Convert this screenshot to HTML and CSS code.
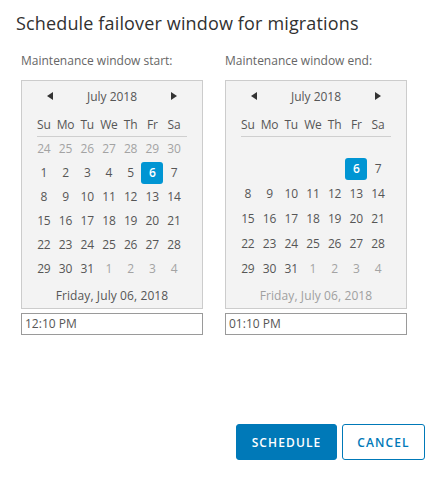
FILE: index.html
```html
<!DOCTYPE html>
<html>
<head>
<meta charset="utf-8">
<link rel="stylesheet" href="styles.css">
</head>
<body>
<div class="dialog">
  <h1 class="title">Schedule failover window for migrations</h1>
  <div class="columns">
    <div class="col">
      <div class="label">Maintenance window start:</div>
      <div class="cal">
        <div class="month">
          <svg class="arrow" width="6" height="8" viewBox="0 0 6 8"><path d="M6 0V8L0 4Z"/></svg>
          <span>July 2018</span>
          <svg class="arrow" width="6" height="8" viewBox="0 0 6 8"><path d="M0 0V8L6 4Z"/></svg>
        </div>
        <div class="wk"><span>Su</span><span>Mo</span><span>Tu</span><span>We</span><span>Th</span><span>Fr</span><span>Sa</span></div>
        <div class="rule"></div>
        <div class="days six">
          <span class="o">24</span><span class="o">25</span><span class="o">26</span><span class="o">27</span><span class="o">28</span><span class="o">29</span><span class="o">30</span>
          <span>1</span><span>2</span><span>3</span><span>4</span><span>5</span><span class="sel">6</span><span>7</span>
          <span>8</span><span>9</span><span>10</span><span>11</span><span>12</span><span>13</span><span>14</span>
          <span>15</span><span>16</span><span>17</span><span>18</span><span>19</span><span>20</span><span>21</span>
          <span>22</span><span>23</span><span>24</span><span>25</span><span>26</span><span>27</span><span>28</span>
          <span>29</span><span>30</span><span>31</span><span class="o">1</span><span class="o">2</span><span class="o">3</span><span class="o">4</span>
        </div>
        <div class="foot">Friday, July 06, 2018</div>
      </div>
      <div class="time">12:10 PM</div>
    </div>
    <div class="col">
      <div class="label">Maintenance window end:</div>
      <div class="cal">
        <div class="month">
          <svg class="arrow" width="6" height="8" viewBox="0 0 6 8"><path d="M6 0V8L0 4Z"/></svg>
          <span>July 2018</span>
          <svg class="arrow" width="6" height="8" viewBox="0 0 6 8"><path d="M0 0V8L6 4Z"/></svg>
        </div>
        <div class="wk"><span>Su</span><span>Mo</span><span>Tu</span><span>We</span><span>Th</span><span>Fr</span><span>Sa</span></div>
        <div class="rule"></div>
        <div class="days five">
          <span></span><span></span><span></span><span></span><span></span><span></span><span></span>
          <span></span><span></span><span></span><span></span><span></span><span class="sel">6</span><span>7</span>
          <span>8</span><span>9</span><span>10</span><span>11</span><span>12</span><span>13</span><span>14</span>
          <span>15</span><span>16</span><span>17</span><span>18</span><span>19</span><span>20</span><span>21</span>
          <span>22</span><span>23</span><span>24</span><span>25</span><span>26</span><span>27</span><span>28</span>
          <span>29</span><span>30</span><span>31</span><span class="o">1</span><span class="o">2</span><span class="o">3</span><span class="o">4</span>
        </div>
        <div class="foot light">Friday, July 06, 2018</div>
      </div>
      <div class="time">01:10 PM</div>
    </div>
  </div>
  <div class="actions">
    <button class="btn primary">SCHEDULE</button>
    <button class="btn outline">CANCEL</button>
  </div>
</div>
</body>
</html>
```

FILE: styles.css
```css
html, body {
  margin: 0;
  padding: 0;
  background: #fff;
}
body {
  font-family: "Open Sans", Lato, sans-serif;
  color: #565656;
}
.dialog {
  width: 441px;
  height: 480px;
  box-sizing: border-box;
  padding: 11px 16px 0 16px;
  display: flex;
  flex-direction: column;
}
.title {
  margin: 0;
  font-size: 18px;
  line-height: 24px;
  font-weight: 400;
  color: #313131;
  letter-spacing: 0.15px;
}
.columns {
  display: flex;
  gap: 22px;
  margin-top: 18px;
  padding-left: 5px;
}
.col {
  width: 182px;
  display: flex;
  flex-direction: column;
}
.label {
  font-size: 12px;
  line-height: 16px;
  color: #666;
  margin-bottom: 11px;
  white-space: nowrap;
}
.cal {
  border: 1px solid #cccccc;
  background: #f3f3f3;
  padding: 3px 0 0 0;
  display: flex;
  flex-direction: column;
}
.month {
  height: 24px;
  display: flex;
  align-items: center;
  justify-content: space-between;
  padding: 0 25px 0 25px;
  font-size: 12px;
  color: #565656;
}
.arrow {
  fill: #333;
}
.wk {
  margin-top: 4px;
  height: 24px;
  display: grid;
  grid-template-columns: repeat(7, 21.7px);
  padding-left: 11px;
  align-items: center;
  font-size: 12px;
  letter-spacing: -0.2px;
}
.wk span, .days span {
  text-align: center;
}
.rule {
  height: 1px;
  background: #cfcfcf;
  margin: 0 15px 0 15px;
}
.days {
  height: 144px;
  display: grid;
  grid-template-columns: repeat(7, 21.7px);
  padding-left: 11px;
  align-items: center;
  justify-items: center;
  font-size: 12px;
  color: #565656;
  letter-spacing: -0.2px;
}
.days.six {
  grid-template-rows: repeat(6, 1fr);
}
.days.five {
  grid-template-rows: 20px repeat(5, 1fr);
}
.days span {
  width: 22px;
  height: 22px;
  line-height: 22px;
}
.days .o {
  color: #a3a3a3;
}
.days .sel {
  background: #0095d3;
  color: #fff;
  border-radius: 3px;
  font-weight: 600;
}
.foot {
  margin-top: 3px;
  height: 24px;
  line-height: 24px;
  text-align: center;
  font-size: 12px;
  letter-spacing: 0.1px;
  color: #565656;
}
.foot.light {
  color: #a0a0a0;
}
.time {
  margin-top: 4px;
  height: 22px;
  box-sizing: border-box;
  border: 1px solid #9a9a9a;
  background: #fff;
  font-size: 12px;
  line-height: 20px;
  padding-left: 3px;
  color: #565656;
}
.actions {
  margin-top: 89px;
  display: flex;
  justify-content: flex-end;
  gap: 5px;
}
.btn {
  height: 36px;
  box-sizing: border-box;
  border-radius: 3px;
  font-family: "Open Sans", sans-serif;
  font-size: 12px;
  font-weight: 600;
  letter-spacing: 1.1px;
  padding: 0;
  cursor: pointer;
}
.primary {
  background: #0079b8;
  border: 1px solid #0079b8;
  color: #fff;
  width: 101px;
}
.outline {
  background: #fff;
  border: 1px solid #0079b8;
  color: #0079b8;
  width: 83px;
}
```
